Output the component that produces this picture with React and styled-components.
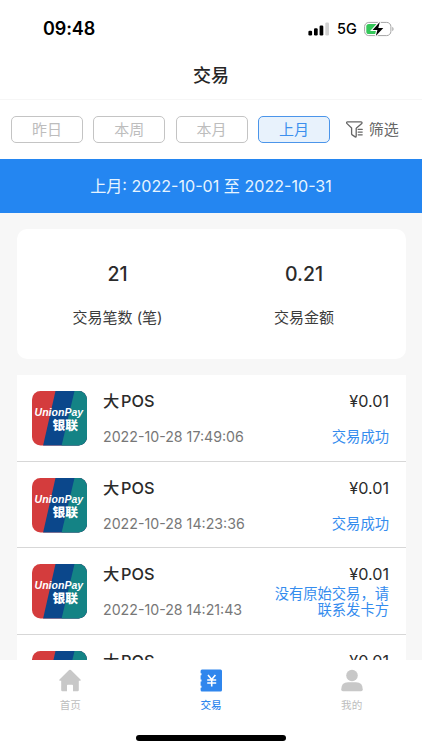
import React from 'react';
import styled, { createGlobalStyle, css } from 'styled-components';

const GlobalStyle = createGlobalStyle`
  * { box-sizing: border-box; }
  html, body { margin: 0; background: #fff; }
  body { font-family: Inter, "Noto Sans CJK SC", sans-serif; color: #2b2b2b; overflow: hidden; }
`;

const Screen = styled.div`
  width: 422px;
  height: 750px;
  display: flex;
  flex-direction: column;
  overflow: hidden;
  background: #fff;
`;

const StatusBar = styled.header`
  height: 51px;
  flex: none;
  display: flex;
  align-items: flex-start;
  justify-content: space-between;
  padding: 18px 28px 0 43px;
`;

const Clock = styled.time`
  font-size: 18px;
  font-weight: 600;
  line-height: 22px;
  letter-spacing: -0.1px;
  color: #000;
`;

const StatusIcons = styled.div`
  display: flex;
  align-items: center;
  height: 22px;
  svg { display: block; }
`;

const Network = styled.span`
  width: 21px;
  margin: 0 6px 0 7px;
  font-size: 14.5px;
  line-height: 22px;
  font-weight: 500;
  letter-spacing: 0;
  color: #000;
`;

const TitleBar = styled.h1`
  height: 49px;
  flex: none;
  margin: 0;
  border-bottom: 1px solid #f6f6f6;
  font-size: 18px;
  font-weight: 500;
  line-height: 50px;
  text-align: center;
  color: #262626;
`;

const Filters = styled.div`
  height: 59px;
  flex: none;
  display: flex;
  align-items: center;
  gap: 10.3px;
  padding: 0 22px 0 11px;
`;

const PeriodButton = styled.button`
  width: 72px;
  height: 27px;
  flex: none;
  padding: 0;
  border: 1px solid #c4c4c4;
  border-radius: 5px;
  background: #fff;
  color: #bdbdbd;
  font: 400 15px/24px Inter, "Noto Sans CJK SC", sans-serif;
  ${(p) => p.$active && css`
    border-color: #4b95ea;
    background: #e8f2fc;
    color: #3c8fee;
  `}
`;

const FilterButton = styled.button`
  display: flex;
  align-items: center;
  gap: 6px;
  margin-left: 5.5px;
  padding: 0;
  border: 0;
  background: none;
  color: #666;
  white-space: nowrap;
  font: 400 15px/24px Inter, "Noto Sans CJK SC", sans-serif;
  svg { display: block; }
`;

const RangeBanner = styled.div`
  height: 54px;
  flex: none;
  background: #2486f1;
  color: #e6f4ff;
  font-size: 16.1px;
  line-height: 54px;
  text-align: center;
`;

const Content = styled.main`
  height: 447px;
  flex: none;
  overflow: hidden;
  padding: 16px 16.5px 0;
  background: #f7f7f7;
`;

const Summary = styled.section`
  height: 130px;
  display: grid;
  grid-template-columns: 202px 171px;
  border-radius: 10px;
  background: #fff;
  text-align: center;
`;

const Stat = styled.div`
  padding-top: 32px;
`;

const StatValue = styled.div`
  font-size: 19.5px;
  font-weight: 500;
  line-height: 26px;
`;

const StatLabel = styled.div`
  margin-top: 19px;
  font-size: 15px;
  line-height: 24px;
  color: #3b3b3b;
`;

const List = styled.ul`
  margin: 16.4px 0 0;
  padding: 0;
  list-style: none;
  background: #fff;
`;

const Row = styled.li`
  height: 86.4px;
  display: flex;
  padding: 16px 16.5px 0 15.5px;
  border-bottom: 1px solid #d7d7d7;
  & > svg { display: block; flex: none; }
`;

const Info = styled.div`
  flex: 1;
  margin-left: 16px;
`;

const Name = styled.div`
  height: 20px;
  font-size: 16.3px;
  font-weight: 500;
  line-height: 21px;
  word-spacing: -2.5px;
`;

const Time = styled.div`
  margin-top: 16px;
  font-size: 14.2px;
  line-height: 20px;
  color: #777;
`;

const Result = styled.div`
  width: 122px;
  display: flex;
  flex-direction: column;
  align-items: flex-end;
`;

const Amount = styled.div`
  height: 20px;
  font-size: 16.2px;
  line-height: 20px;
`;

const State = styled.div`
  height: 34px;
  margin-top: ${(p) => (p.$long ? 1.5 : 9)}px;
  font-size: 14.3px;
  line-height: ${(p) => (p.$long ? 16.5 : 34)}px;
  text-align: right;
  white-space: pre-line;
  color: #348cee;
`;

const TabBar = styled.nav`
  height: 72px;
  flex: none;
  display: grid;
  grid-template-columns: repeat(3, 1fr);
  background: #fff;
`;

const Tab = styled.div`
  display: flex;
  flex-direction: column;
  align-items: center;
  padding-top: 9px;
  font-size: 10.6px;
  line-height: 16px;
  font-weight: ${(p) => (p.$active ? 500 : 400)};
  color: ${(p) => (p.$active ? '#2f86ed' : '#bdbdbd')};
  svg { display: block; margin-bottom: 6px; }
`;

const HomeIndicator = styled.div`
  width: 150px;
  height: 6px;
  flex: none;
  align-self: center;
  margin-top: 3px;
  border-radius: 3px;
  background: #000;
`;

const LogoWord = styled.text`
  fill: #fff;
  font-family: ${(p) => (p.$cjk ? '"Noto Sans CJK SC"' : '"Liberation Sans"')}, sans-serif;
  font-size: ${(p) => (p.$cjk ? 12.2 : 10.6)}px;
  font-weight: ${(p) => (p.$cjk ? 900 : 700)};
  font-style: ${(p) => (p.$cjk ? 'normal' : 'italic')};
`;

const UnionPayLogo = () => (
  <svg width="55" height="55" viewBox="0 0 55 55">
    <defs>
      <clipPath id="tile"><rect width="55" height="54.5" rx="8.5" /></clipPath>
    </defs>
    <g clipPath="url(#tile)">
      <rect width="55" height="55" fill="#d43c3d" />
      <path d="M23.5 0H55V55H11Z" fill="#0b478b" />
      <path d="M42.500 0H55V55H29.500Z" fill="#148385" />
    </g>
    <LogoWord x="2.6" y="25.4" textLength="48.5" lengthAdjust="spacingAndGlyphs">UnionPay</LogoWord>
    <LogoWord $cjk x="20.500" y="38.600" textLength="25.500" lengthAdjust="spacingAndGlyphs">银联</LogoWord>
  </svg>
);

const SignalIcon = () => (
  <svg width="22" height="14" viewBox="0 0 22 14">
    <rect x="0.4" y="8.8" width="3.7" height="4.7" rx="1.2" />
    <rect x="6" y="6.3" width="3.7" height="7.2" rx="1.2" />
    <rect x="11.6" y="3.5" width="3.7" height="10" rx="1.2" />
    <rect x="17.3" y="0.5" width="3.7" height="13" rx="1.2" fill="#d2d2d2" />
  </svg>
);

const BatteryIcon = () => (
  <svg width="30" height="16" viewBox="0 0 30 16">
    <rect x="0.6" y="1.4" width="26.3" height="13.2" rx="4.2" fill="none" stroke="#a5a5a5" />
    <path d="M28.3 5.7q1.3.8 1.3 2.3t-1.3 2.3z" fill="#a5a5a5" />
    <path d="M4.9 3H13.5V13H4.9Q2.3 13 2.3 10.4V5.6Q2.3 3 4.9 3Z" fill="#34c759" />
    <path d="M15.800 1 8.600 8.900h4.800l-1.600 6 7.500-8h-5z" fill="#000" stroke="#fff" strokeWidth="2.200" paintOrder="stroke" />
  </svg>
);

const FunnelIcon = () => (
  <svg width="17" height="17" viewBox="0 0 17 17" fill="none" stroke="#666" strokeWidth="1.3" strokeLinejoin="round" strokeLinecap="round">
    <path d="M10.5 7.1 15.8 2.4Q16.4.9 14.9.8H1.6Q.1.9.8 2.4L5.6 7v5.8q0 .7.6 1.1l3 2q1 .4 1-.8V7.3" />
    <path d="M12.2 8.4h4M12.2 11.1h4M12.2 13.8h4" />
  </svg>
);

const HomeIcon = () => (
  <svg width="22" height="23" viewBox="0 0 22 23" fill="#c8c8c8">
    <path d="M10.1 1.1q.9-.8 1.8 0L21.500 10.500q.8 1.200-.4 1.300H19.800V21q0 1.200-1.200 1.200h-4.600v-5.700q0-.8-.8-.8H8.800q-.8 0-.8.8v5.700H3.400Q2.200 22.200 2.200 21v-9.200H.9Q-.3 11.700.5 10.500Z" />
  </svg>
);

const TradeIcon = () => (
  <svg width="22" height="23" viewBox="0 0 22 23">
    <path d="M2 0.500H20.500Q22 .5 22 2V21Q22 22.500 20.500 22.500H2Q.6 22.500.6 21v-2.200h.9v-2H.6v-4.300h.9v-2H.6V6.200h.9v-2H.6V2Q.6.5 2 .5Z" fill="#2f86ed" />
    <path d="M8 6 11.700 10.400 15.400 6M7.200 11H16.200M7.200 14H16.200M11.700 10.400V17.500" fill="none" stroke="#fff" strokeWidth="1.600" />
  </svg>
);

const UserIcon = () => (
  <svg width="22" height="23" viewBox="0 0 22 23" fill="#c8c8c8">
    <circle cx="11" cy="6.500" r="5.800" />
    <path d="M.2 20.500Q.2 13.200 7 13.200h8q6.800 0 6.800 7.300 0 1.700-1.800 1.700H2Q.2 22.200.2 20.500Z" />
  </svg>
);

const periods = ['昨日', '本周', '本月', '上月'];

const transactions = [
  { time: '2022-10-28 17:49:06', state: '交易成功' },
  { time: '2022-10-28 14:23:36', state: '交易成功' },
  { time: '2022-10-28 14:21:43', state: '没有原始交易，请\n联系发卡方', long: true },
  { time: '', state: '' },
];

const tabs = [
  { label: '首页', Icon: HomeIcon },
  { label: '交易', Icon: TradeIcon, active: true },
  { label: '我的', Icon: UserIcon },
];

export default function App() {
  return (
    <Screen>
      <GlobalStyle />
      <StatusBar>
        <Clock>09:48</Clock>
        <StatusIcons>
          <SignalIcon />
          <Network>5G</Network>
          <BatteryIcon />
        </StatusIcons>
      </StatusBar>
      <TitleBar>交易</TitleBar>
      <Filters>
        {periods.map((label) => (
          <PeriodButton key={label} $active={label === '上月'}>{label}</PeriodButton>
        ))}
        <FilterButton><FunnelIcon />筛选</FilterButton>
      </Filters>
      <RangeBanner>上月: 2022-10-01 至 2022-10-31</RangeBanner>
      <Content>
        <Summary>
          <Stat>
            <StatValue>21</StatValue>
            <StatLabel>交易笔数 (笔)</StatLabel>
          </Stat>
          <Stat>
            <StatValue>0.21</StatValue>
            <StatLabel>交易金额</StatLabel>
          </Stat>
        </Summary>
        <List>
          {transactions.map((t, i) => (
            <Row key={i}>
              <UnionPayLogo />
              <Info>
                <Name>大 POS</Name>
                <Time>{t.time}</Time>
              </Info>
              <Result>
                <Amount>¥0.01</Amount>
                <State $long={t.long}>{t.state}</State>
              </Result>
            </Row>
          ))}
        </List>
      </Content>
      <TabBar>
        {tabs.map(({ label, Icon, active }) => (
          <Tab key={label} $active={active}><Icon />{label}</Tab>
        ))}
      </TabBar>
      <HomeIndicator />
    </Screen>
  );
}
